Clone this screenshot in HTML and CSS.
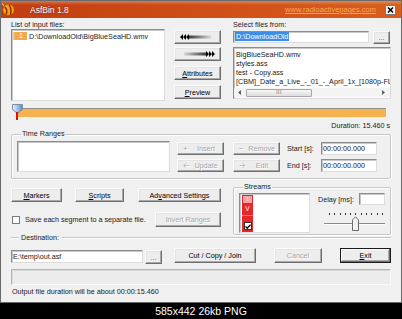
FILE: index.html
```html
<!DOCTYPE html>
<html>
<head>
<meta charset="utf-8">
<title>AsfBin 1.8</title>
<link rel="stylesheet" href="styles.css">
</head>
<body>
<div class="window">
  <div class="titlebar">
    <svg class="app-icon" width="13" height="13" viewBox="0 0 13 13">
      <circle cx="6.5" cy="6.8" r="5.8" fill="#f2a01e" stroke="#b84a00" stroke-width="0.8"/>
      <path d="M2.6 4 Q6 6.5 4.2 11.6" stroke="#a02800" stroke-width="1.5" fill="none"/>
      <path d="M6.8 1.4 Q10.2 6 8.4 12.2" stroke="#a02800" stroke-width="1.5" fill="none"/>
      <path d="M0.5 0.5 L1.5 2.5" stroke="#fff6e0" stroke-width="1"/>
    </svg>
    <span class="title">AsfBin 1.8</span>
    <span class="site-link">www.radioactivepages.com</span>
    <span class="close-btn">
      <svg width="7" height="6" viewBox="0 0 7 6"><path d="M1 0.5 L6 5.5 M6 0.5 L1 5.5" stroke="#000" stroke-width="1.5"/></svg>
    </span>
  </div>

  <div class="content">
    <div class="top-row">
      <div class="col-input">
        <div class="label">List of input files:</div>
        <div class="sunken input-list">
          <div class="list-row"><span class="idx">1</span>D:\DownloadOld\BigBlueSeaHD.wmv</div>
        </div>
      </div>

      <div class="col-arrows">
        <div class="btn arrow-btn">
          <svg width="32" height="6" viewBox="0 0 32 6">
            <defs>
              <linearGradient id="barL" x1="0" x2="1" y1="0" y2="0">
                <stop offset="0" stop-color="#3a3a3a"/>
                <stop offset="1" stop-color="#d8d8d8"/>
              </linearGradient>
            </defs>
            <path d="M0 3 L3 0 L3 6 Z M3 3 L6 0 L6 6 Z M6 3 L9 0 L9 6 Z" fill="#000"/>
            <rect x="9" y="1.5" width="22" height="3" fill="url(#barL)"/>
          </svg>
        </div>
        <div class="btn arrow-btn second">
          <svg width="32" height="6" viewBox="0 0 32 6">
            <defs>
              <linearGradient id="barR" x1="0" x2="1" y1="0" y2="0">
                <stop offset="0" stop-color="#d8d8d8"/>
                <stop offset="1" stop-color="#3a3a3a"/>
              </linearGradient>
            </defs>
            <rect x="1" y="1.5" width="22" height="3" fill="url(#barR)"/>
            <path d="M23 0 L26 3 L23 6 Z M26 0 L29 3 L26 6 Z M29 0 L32 3 L29 6 Z" fill="#000"/>
          </svg>
        </div>
        <div class="btn attr-btn"><span><u>A</u>ttributes</span></div>
        <div class="btn preview-btn"><span><u>P</u>review</span></div>
      </div>

      <div class="col-source">
        <div class="label">Select files from:</div>
        <div class="path-row">
          <div class="sunken textbox path-box"><span class="selected-text">D:\DownloadOld</span></div>
          <div class="btn browse-btn">...</div>
        </div>
        <div class="sunken file-list">
          <div class="file-items">
            <div>BigBlueSeaHD.wmv</div>
            <div>styles.ass</div>
            <div>test - Copy.ass</div>
            <div>[CBM]_Date_a_Live_-_01_-_April_1x_[1080p-FL</div>
          </div>
          <div class="hscroll">
            <span class="scroll-arrow">
              <svg width="3" height="5" viewBox="0 0 3 5"><path d="M3 0 L0 2.5 L3 5 Z" fill="#606060"/></svg>
            </span>
            <span class="scroll-thumb"><span class="grip">III</span></span>
            <span class="scroll-arrow right">
              <svg width="3" height="5" viewBox="0 0 3 5"><path d="M0 0 L3 2.5 L0 5 Z" fill="#606060"/></svg>
            </span>
          </div>
        </div>
      </div>
    </div>

    <div class="timeline">
      <div class="timeline-track"></div>
      <svg class="timeline-thumb" width="11" height="10" viewBox="0 0 11 10">
        <defs>
          <linearGradient id="thumbG" x1="0" x2="1" y1="0" y2="0">
            <stop offset="0" stop-color="#e6f0fb"/>
            <stop offset="0.5" stop-color="#9fc0e8"/>
            <stop offset="1" stop-color="#5c88c4"/>
          </linearGradient>
        </defs>
        <path d="M0.5 0.5 H10.5 V5.5 L5.5 9.5 L0.5 5.5 Z" fill="url(#thumbG)" stroke="#7a8ea8" stroke-width="1"/>
      </svg>
      <div class="timeline-marker"></div>
    </div>

    <div class="duration">Duration: 15.460 s</div>

    <fieldset class="group time-ranges">
      <legend>Time Ranges</legend>
      <div class="tr-body">
        <div class="sunken range-list"></div>
        <div class="tr-col">
          <div class="btn disabled"><span class="sym">+</span><span class="bt">Insert</span></div>
          <div class="btn disabled"><span class="sym">&#129120;</span><span class="bt">Update</span></div>
        </div>
        <div class="tr-col second">
          <div class="btn disabled"><span class="sym">&minus;</span><span class="bt">Remove</span></div>
          <div class="btn disabled"><span class="sym">&#129122;</span><span class="bt">Edit</span></div>
        </div>
        <div class="tr-labels">
          <div class="tr-label">Start [s]:</div>
          <div class="tr-label">End [s]:</div>
        </div>
        <div class="tr-inputs">
          <div class="sunken textbox time-box">00:00:00.000</div>
          <div class="sunken textbox time-box">00:00:00.000</div>
        </div>
      </div>
    </fieldset>

    <div class="mid-row">
      <div class="mid-left">
        <div class="btn-row">
          <div class="btn markers-btn"><span><u>M</u>arkers</span></div>
          <div class="btn scripts-btn"><span><u>S</u>cripts</span></div>
          <div class="btn adv-btn"><span>Ad<u>v</u>anced Settings</span></div>
        </div>
        <div class="save-row">
          <span class="checkbox"></span>
          <span class="save-label">Save each segment to a separate file.</span>
          <div class="btn disabled invert-btn">Invert Ranges</div>
        </div>
      </div>

      <fieldset class="group streams">
        <legend>Streams</legend>
        <div class="streams-body">
          <div class="sunken stream-list">
            <div class="stream-col">
              <span class="st-flag">!</span>
              <span class="st-v">V</span>
              <span class="st-line"></span>
              <span class="st-check">
                <svg width="6" height="5" viewBox="0 0 6 5"><path d="M0.5 2.5 L2.2 4.2 L5.5 0.6" stroke="#000" stroke-width="1.4" fill="none"/></svg>
              </span>
            </div>
          </div>
          <div class="stream-side">
            <div class="delay-row">
              <span>Delay [ms]:</span>
              <div class="sunken textbox delay-box"></div>
            </div>
            <div class="delay-slider">
              <div class="ticks">
                <i></i><i></i><i></i><i></i><i></i><i></i><i></i><i></i><i></i><i></i><i></i>
              </div>
              <div class="slider-track"></div>
              <svg class="slider-thumb" width="7" height="15" viewBox="0 0 7 15">
                <path d="M0.5 14.5 V4 L3.5 0.8 L6.5 4 V14.5 Z" fill="#f0f0f0" stroke="#6a6a6a" stroke-width="1"/>
                <path d="M1.5 13.5 V4.4 L3.5 2.2" stroke="#fff" stroke-width="1" fill="none"/>
              </svg>
            </div>
          </div>
        </div>
      </fieldset>
    </div>

    <div class="dest-sep">
      <span class="sep-line short"></span>
      <span class="sep-text">Destination:</span>
      <span class="sep-line long"></span>
    </div>

    <div class="dest-row">
      <div class="sunken textbox dest-box">E:\temp\out.asf</div>
      <div class="btn dest-browse">...</div>
      <div class="btn cut-btn">Cut / Copy / Join</div>
      <div class="btn disabled cancel-btn">Cancel</div>
      <div class="btn default exit-btn"><span><u>E</u>xit</span></div>
    </div>

    <div class="progress"></div>

    <div class="status">Output file duration will be about 00:00:15.460</div>
  </div>
</div>
<div class="caption">585x442 26kb PNG</div>
</body>
</html>
```

FILE: styles.css
```css
* { box-sizing: border-box; }

html, body {
  margin: 0;
  padding: 0;
  background: #000;
}

body {
  width: 402px;
  height: 319px;
  overflow: hidden;
  font-family: "Liberation Sans", Arial, sans-serif;
}

.window {
  width: 402px;
  height: 303px;
  background: #f0f0f0;
  border: 1px solid #6a6a6a;
  font-size: 7.2px;
  color: #1a1a1a;
  display: flex;
  flex-direction: column;
}

/* ---------- title bar ---------- */
.titlebar {
  height: 17px;
  flex: none;
  display: flex;
  align-items: center;
  padding: 0 5px 0 1px;
  background:
    linear-gradient(to bottom, rgba(255,255,255,0.28), rgba(255,255,255,0) 4px),
    linear-gradient(to right, #c23e10, #cf4e16 50%, #d95e1c);
}

.app-icon { flex: none; }

.title {
  margin-left: 15px;
  color: #fff;
  font-size: 8.5px;
  text-shadow: 0 0 2px rgba(90, 20, 0, 0.7);
}

.site-link {
  margin-left: auto;
  margin-right: 9px;
  color: #f7a85a;
  text-decoration: underline;
  font-size: 7.5px;
}

.close-btn {
  width: 11px;
  height: 10px;
  display: flex;
  align-items: center;
  justify-content: center;
  background: #f6f6f6;
  border: 1px solid #7a7a7a;
}

/* ---------- common ---------- */
.content {
  flex: 1;
  padding: 2px 10px 0 10px;
  display: flex;
  flex-direction: column;
}

.label {
  height: 9px;
  line-height: 9px;
  white-space: nowrap;
}

.sunken {
  background: #fff;
  border: 1px solid;
  border-color: #8c8c8c #dcdcdc #dcdcdc #8c8c8c;
  box-shadow: inset 1px 1px 0 #c8c8c8;
}

.textbox {
  height: 13px;
  line-height: 11px;
  padding-left: 1px;
  white-space: nowrap;
  overflow: hidden;
}

.btn {
  display: flex;
  align-items: center;
  justify-content: center;
  height: 14px;
  background: #ededed;
  border: 1px solid;
  border-color: #fbfbfb #6e6e6e #6e6e6e #fbfbfb;
  box-shadow: inset -1px -1px 0 #a9a9a9, inset 1px 1px 0 #e4e4e4;
  color: #000;
  white-space: nowrap;
  font-size: 7.2px;
}

.btn u { text-underline-offset: 1px; }

.btn.disabled {
  color: #a6a6a6;
  text-shadow: 1px 1px 0 #fff;
}

.btn.default {
  border-color: #1a1a1a;
  box-shadow: inset -1px -1px 0 #6e6e6e, inset 1px 1px 0 #fbfbfb, inset -2px -2px 0 #a9a9a9;
}

.group {
  margin: 0;
  border: 1px solid #c6c6c6;
  border-radius: 2px;
  box-shadow: inset 1px 1px 0 #fff, 1px 1px 0 #fff;
  min-width: 0;
}

.group legend {
  font-size: 7.2px;
  line-height: 8px;
  padding: 0 1px;
  margin-left: 4px;
  color: #1a1a1a;
}

/* ---------- top row ---------- */
.top-row {
  display: flex;
  align-items: flex-start;
}

.col-input { width: 154px; }

.input-list {
  height: 72px;
  padding: 2px 1px;
}

.list-row {
  display: flex;
  align-items: center;
  height: 8px;
  white-space: nowrap;
}

.idx {
  width: 14px;
  height: 8px;
  line-height: 8px;
  margin-right: 2px;
  padding-left: 6px;
  background: linear-gradient(to right, #fbd6a0 0, #f6a94a 2px, #f6a94a);
  color: #fff;
}

.col-arrows {
  width: 47px;
  margin: 10px 12px 0 9px;
  display: flex;
  flex-direction: column;
}

.arrow-btn { height: 14px; padding-right: 4px; }
.arrow-btn.second { margin-top: 3px; padding-right: 0; padding-left: 3px; }
.attr-btn { margin-top: 5px; }
.preview-btn { margin-top: 5px; }

.col-source { width: 158px; }

.path-row {
  display: flex;
  margin-top: 2px;
  align-items: flex-start;
}

.path-box {
  width: 136px;
  height: 12px;
  line-height: 10px;
}

.selected-text {
  background: #3a8fe8;
  color: #fff;
  padding: 0 1px;
}

.browse-btn {
  width: 17px;
  height: 13px;
  margin-left: 4px;
  line-height: 8px;
  color: #555;
}

.file-list {
  margin-top: 3px;
  height: 52px;
  display: flex;
  flex-direction: column;
  overflow: hidden;
}

.file-items {
  flex: 1;
  padding: 2px 0 0 2px;
  line-height: 9px;
  white-space: nowrap;
  overflow: hidden;
}

.hscroll {
  height: 9px;
  display: flex;
  align-items: center;
  background: #f4f4f4;
  margin-bottom: 1px;
}

.scroll-arrow {
  width: 10px;
  display: flex;
  justify-content: center;
}

.scroll-thumb {
  width: 66px;
  height: 8px;
  margin-left: 2px;
  background: linear-gradient(to bottom, #f6f6f6, #dedede);
  border: 1px solid #a8a8a8;
  border-radius: 1px;
  display: flex;
  align-items: center;
  justify-content: center;
}

.grip {
  font-size: 5px;
  line-height: 5px;
  color: #666;
  letter-spacing: 0.5px;
}

.scroll-arrow.right { margin-left: auto; margin-right: 2px; }

/* ---------- timeline ---------- */
.timeline {
  position: relative;
  height: 20px;
}

.timeline-track {
  position: absolute;
  left: 6px;
  top: 7px;
  width: 369px;
  height: 9px;
  background: #f6b24c;
  border-top: 1px solid #8e8e8e;
}

.timeline-thumb {
  position: absolute;
  left: 1px;
  top: 3px;
}

.timeline-marker {
  position: absolute;
  left: 5px;
  top: 11px;
  width: 2px;
  height: 8px;
  background: #e01010;
}

.duration {
  height: 9px;
  line-height: 9px;
  text-align: right;
  padding-right: 1px;
}

/* ---------- time ranges ---------- */
.time-ranges { padding: 3px 5px 6px 5px; }

.tr-body {
  display: flex;
  align-items: flex-start;
}

.range-list {
  width: 153px;
  height: 31px;
}

.tr-col {
  width: 47px;
  margin-left: 7px;
  margin-top: 1px;
  display: flex;
  flex-direction: column;
  gap: 4px;
}

.tr-col.second { margin-left: 9px; }

.tr-col .btn {
  height: 13px;
  justify-content: flex-start;
  padding-left: 5px;
}

.tr-col .sym {
  width: 10px;
  font-size: 8px;
}

.tr-col .bt { flex: 1; text-align: center; padding-right: 4px; }

.tr-labels {
  width: 34px;
  margin-left: 7px;
  margin-top: 1px;
  display: flex;
  flex-direction: column;
  gap: 4px;
}

.tr-label {
  height: 13px;
  line-height: 13px;
}

.tr-inputs {
  width: 56px;
  margin-top: 1px;
  display: flex;
  flex-direction: column;
  gap: 4px;
}

.time-box { height: 13px; }

/* ---------- middle ---------- */
.mid-row {
  display: flex;
  align-items: flex-start;
}

.mid-left {
  width: 210px;
  margin-right: 12px;
}

.btn-row {
  display: flex;
  margin-top: 9px;
}

.markers-btn { width: 51px; }
.scripts-btn { width: 49px; margin-left: 13px; }
.adv-btn { width: 83px; margin-left: 14px; }

.save-row {
  display: flex;
  align-items: center;
  margin-top: 10px;
  height: 15px;
}

.checkbox {
  width: 8px;
  height: 8px;
  margin-left: 1px;
  background: #fff;
  border: 1px solid #7a7a7a;
}

.save-label { margin-left: 5px; }

.invert-btn {
  width: 66px;
  height: 15px;
  margin-left: auto;
}

.streams {
  width: 158px;
  margin-top: 4px;
  padding: 2px 5px 1px 5px;
}

.streams-body {
  display: flex;
  align-items: flex-start;
}

.stream-list {
  width: 71px;
  height: 40px;
  padding: 1px;
}

.stream-col {
  width: 11px;
  height: 37px;
  margin-left: 1px;
  background: #e8262a;
  display: flex;
  flex-direction: column;
  align-items: center;
}

.st-flag {
  width: 9px;
  height: 7px;
  margin-top: 1px;
  background: #f3a4a4;
  color: #fff;
  font-size: 6px;
  line-height: 7px;
  text-align: center;
}

.st-v {
  margin-top: 2px;
  color: #fff;
  font-size: 6.5px;
  line-height: 7px;
}

.st-line {
  width: 11px;
  height: 1px;
  margin-top: 3px;
  background: #f58a2a;
}

.st-check {
  width: 8px;
  height: 8px;
  margin-top: 6px;
  background: #fff;
  border: 1px solid #333;
  display: flex;
  align-items: center;
  justify-content: center;
}

.stream-side {
  flex: 1;
  margin-left: 8px;
}

.delay-row {
  display: flex;
  align-items: center;
  justify-content: space-between;
  height: 12px;
}

.delay-box {
  width: 26px;
  height: 12px;
}

.delay-slider {
  position: relative;
  width: 61px;
  height: 20px;
  margin: 8px 0 0 6px;
}

.ticks {
  display: flex;
  justify-content: space-between;
  padding: 0 2px 0 5px;
  height: 2px;
}

.ticks i {
  width: 1px;
  height: 2px;
  background: #333;
}

.slider-track {
  margin-top: 8px;
  height: 2px;
  border-top: 1px solid #8a8a8a;
  border-bottom: 1px solid #fff;
}

.slider-thumb {
  position: absolute;
  left: 28px;
  top: 3px;
}

/* ---------- destination ---------- */
.dest-sep {
  display: flex;
  align-items: center;
  height: 6px;
}

.sep-line {
  height: 2px;
  border-top: 1px solid #c6c6c6;
  border-bottom: 1px solid #fff;
}

.sep-line.short { width: 8px; }
.sep-line.long { flex: 1; }

.sep-text {
  padding: 0 3px 0 2px;
  line-height: 6px;
}

.dest-row {
  display: flex;
  align-items: flex-start;
  margin-top: 7px;
}

.dest-box {
  width: 132px;
  margin-top: 2px;
}

.dest-browse {
  width: 17px;
  height: 14px;
  margin-left: 2px;
  margin-top: 2px;
  color: #555;
}

.cut-btn { width: 82px; height: 15px; margin-left: 12px; }
.cancel-btn { width: 48px; height: 15px; margin-left: 18px; }
.exit-btn { width: 51px; height: 15px; margin-left: 18px; }

.progress {
  margin-top: 5px;
  height: 16px;
  background: #ececec;
  border: 1px solid;
  border-color: #b4b4b4 #fafafa #fafafa #b4b4b4;
  box-shadow: inset 1px 1px 0 #dadada;
}

.status {
  margin-top: 2px;
  padding-left: 1px;
  line-height: 10px;
  white-space: nowrap;
}

/* ---------- caption ---------- */
.caption {
  height: 16px;
  line-height: 16px;
  text-align: center;
  color: #fff;
  font-size: 10.5px;
  font-family: "Liberation Sans", Arial, sans-serif;
}
```
